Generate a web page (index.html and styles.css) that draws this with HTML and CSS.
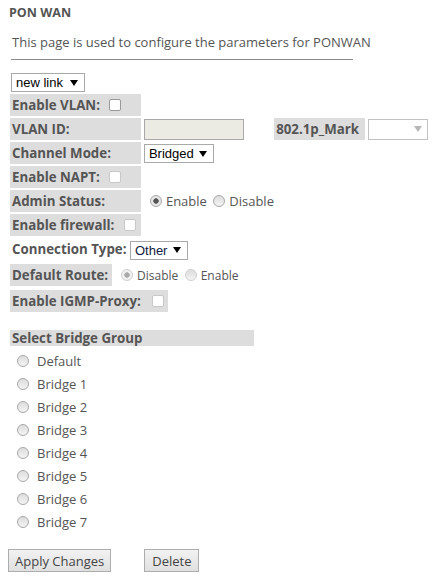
FILE: index.html
```html
<!DOCTYPE html>
<html>
<head>
<meta charset="utf-8">
<link rel="stylesheet" href="styles.css">
</head>
<body>
<h1 class="title">PON WAN</h1>
<p class="intro">This page is used to configure the parameters for PONWAN</p>
<hr class="rule">
<div class="linkrow">
  <select class="sel sel-link"><option>new link</option></select>
</div>

<table class="grid grid-main">
  <tr>
    <td class="lab">Enable VLAN: <input type="checkbox" class="cb"></td>
  </tr>
  <tr>
    <td class="lab">VLAN ID:</td>
    <td class="val val-wide"><input type="text" class="txt" disabled></td>
    <td class="lab lab-mark">802.1p_Mark</td>
    <td class="val"><select class="sel sel-mark" disabled><option></option></select></td>
  </tr>
  <tr>
    <td class="lab">Channel Mode:</td>
    <td class="val"><select class="sel sel-mode"><option>Bridged</option></select></td>
  </tr>
  <tr>
    <td class="lab">Enable NAPT: <input type="checkbox" class="cb" disabled></td>
  </tr>
  <tr>
    <td class="lab">Admin Status:</td>
    <td class="val val-radio" colspan="3">
      <label class="opt"><input type="radio" class="rd" name="adm" checked>Enable</label>
      <label class="opt"><input type="radio" class="rd" name="adm">Disable</label>
    </td>
  </tr>
  <tr>
    <td class="lab">Enable firewall: <input type="checkbox" class="cb" disabled></td>
  </tr>
</table>

<table class="grid grid-auto">
  <tr>
    <td class="lab lab-plain">Connection Type: <select class="sel sel-type"><option>Other</option></select></td>
  </tr>
</table>

<table class="grid grid-auto">
  <tr>
    <td class="lab">Default Route:</td>
    <td class="val val-radio">
      <label class="opt opt-dis"><input type="radio" class="rd" name="dr" checked disabled>Disable</label>
      <label class="opt opt-dis"><input type="radio" class="rd" name="dr" disabled>Enable</label>
    </td>
  </tr>
</table>

<table class="grid grid-auto">
  <tr>
    <td class="lab lab-igmp">Enable IGMP-Proxy: <input type="checkbox" class="cb" disabled></td>
  </tr>
</table>

<div class="bridge">
  <div class="bridge-head">Select Bridge Group</div>
  <ul class="bridge-list">
    <li><label class="bopt"><input type="radio" class="rd" name="bg">Default</label></li>
    <li><label class="bopt"><input type="radio" class="rd" name="bg">Bridge 1</label></li>
    <li><label class="bopt"><input type="radio" class="rd" name="bg">Bridge 2</label></li>
    <li><label class="bopt"><input type="radio" class="rd" name="bg">Bridge 3</label></li>
    <li><label class="bopt"><input type="radio" class="rd" name="bg">Bridge 4</label></li>
    <li><label class="bopt"><input type="radio" class="rd" name="bg">Bridge 5</label></li>
    <li><label class="bopt"><input type="radio" class="rd" name="bg">Bridge 6</label></li>
    <li><label class="bopt"><input type="radio" class="rd" name="bg">Bridge 7</label></li>
  </ul>
</div>

<div class="actions">
  <button class="btn">Apply Changes</button>
  <button class="btn btn-del">Delete</button>
</div>
</body>
</html>
```

FILE: styles.css
```css
* { box-sizing: border-box; }

body {
  margin: 8px;
  font-family: "Open Sans", "DejaVu Sans", sans-serif;
  font-size: 13px;
  color: #555;
  background: #fff;
}

.title {
  margin: -3px 0 0 0;
  padding: 0 0 0 1px;
  font-size: 12.5px;
  font-weight: 700;
  color: #555;
  line-height: 16px;
}

.intro {
  margin: 12px 0 0 4px;
  line-height: 18px;
  font-size: 13px;
  color: #555;
}

.rule {
  margin: 8px 0 0 3px;
  width: 342px;
  border: 0;
  border-top: 1px solid #888;
  height: 0;
}

.linkrow {
  margin: 12px 0 0 3px;
  height: 19px;
}

.sel {
  appearance: none;
  -webkit-appearance: none;
  font-family: "Liberation Sans", Arial, sans-serif;
  font-size: 13px;
  color: #000;
  height: 19px;
  padding: 0 16px 0 4px;
  border: 1px solid #a9a9a9;
  border-radius: 0;
  background-color: #fff;
  background-image: url("data:image/svg+xml,%3Csvg xmlns='http://www.w3.org/2000/svg' width='8' height='6'%3E%3Cpath d='M0 0H8L4 6Z' fill='%23000'/%3E%3C/svg%3E");
  background-repeat: no-repeat;
  background-position: right 6px center;
  line-height: 17px;
  vertical-align: middle;
}

.sel-link { width: 74px; }
.sel-mode { width: 70px; }
.sel-type { width: 58px; margin-left: 0; color: #102040; }
.sel-mark {
  width: 60px;
  height: 21px;
  background-image: url("data:image/svg+xml,%3Csvg xmlns='http://www.w3.org/2000/svg' width='8' height='6'%3E%3Cpath d='M0 0H8L4 6Z' fill='%23999'/%3E%3C/svg%3E");
  background-position: right 5px center;
}

.grid {
  border-spacing: 2px;
  margin: 0;
  border-collapse: separate;
}

.grid-main { margin-top: 1px; }

.lab {
  background: #ddd;
  font-weight: 700;
  font-size: 13.3px;
  color: #555;
  height: 22px;
  padding: 0 2px;
  white-space: nowrap;
  width: 131px;
  line-height: 18px;
}

.grid-auto .lab { width: auto; padding-right: 4px; }
.lab-plain { background: transparent; height: 20px; }
.lab-mark { width: 91px; padding-right: 0; }
.lab-igmp { padding-right: 5px; }

.val {
  padding: 0 0 0 1px;
  height: 22px;
  white-space: nowrap;
}
.val-wide { width: 130px; }

.txt {
  width: 100px;
  height: 21px;
  border: 1px solid #a9a9a9;
  background: #ebebe4;
  vertical-align: middle;
}

.cb {
  appearance: none;
  -webkit-appearance: none;
  width: 12px;
  height: 12px;
  margin: 0 0 0 6px;
  border: 1px solid #999;
  border-radius: 2px;
  background: #fff;
  vertical-align: -1px;
}
.cb:disabled { border-color: #c8c8c8; }
.lab-igmp .cb { margin-left: 8px; }

.rd {
  appearance: none;
  -webkit-appearance: none;
  width: 12px;
  height: 12px;
  margin: 0 4px 0 0;
  border: 1px solid #a8a8a8;
  border-radius: 50%;
  background: linear-gradient(#dcdcdc, #f4f4f4);
  vertical-align: -1px;
}
.rd:checked {
  background: radial-gradient(circle, #555 0 2.4px, #e6e6e6 3px);
}
.rd:disabled { border-color: #d0d0d0; }
.rd:disabled:checked {
  background: radial-gradient(circle, #aaa 0 2.4px, #f0f0f0 3px);
}

.val-radio { padding-left: 7px; }
.opt { margin-right: 3px; }
.opt-dis { font-size: 12px; }

.bridge { margin-top: 16px; }
.bridge-head {
  margin-left: 2px;
  width: 244px;
  background: #ddd;
  font-weight: 700;
  font-size: 13.3px;
  height: 16px;
  line-height: 16px;
  padding-left: 2px;
}
.bridge-list {
  list-style: none;
  margin: 6px 0 0 0;
  padding: 0 0 0 9px;
}
.bridge-list li { height: 23px; line-height: 18px; }
.bopt .rd { margin-right: 8px; }

.actions {
  margin-top: 13px;
  display: flex;
  gap: 33px;
}

.btn {
  font-family: "Open Sans", "DejaVu Sans", sans-serif;
  font-size: 13px;
  color: #444;
  height: 23px;
  padding: 0 6px;
  border: 1px solid #adadad;
  border-radius: 0;
  background: linear-gradient(#f2f2f2, #e0e0e0);
}
.btn-del { padding: 0 7px; }
```
